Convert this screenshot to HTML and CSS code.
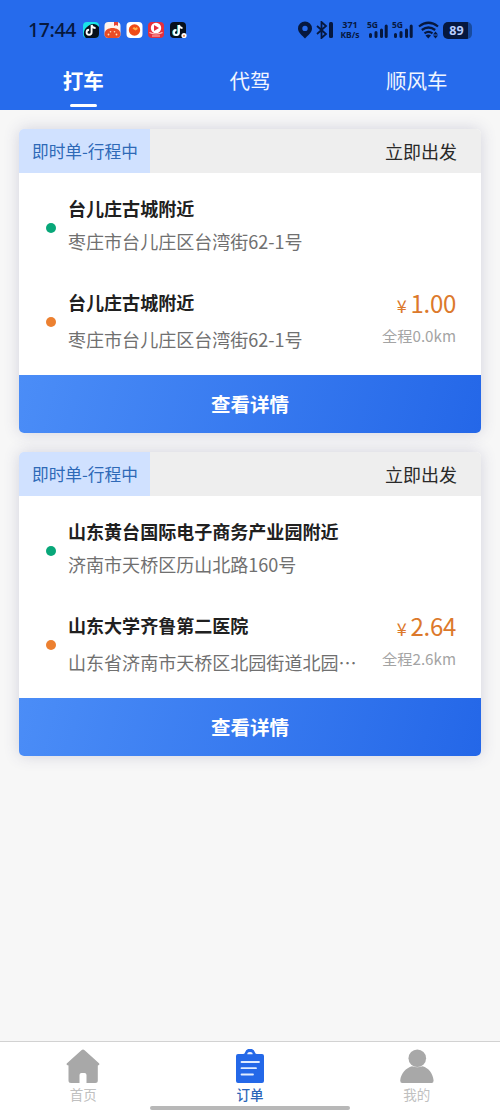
FILE: index.html
```
<!DOCTYPE html>
<html lang="zh-CN">
<head>
<meta charset="utf-8">
<meta name="viewport" content="width=device-width">
<title>订单</title>
<link rel="stylesheet" href="styles.css">
</head>
<body>
<div class="app">
  <header class="top">
    <div class="status">
      <div class="status-left">
        <span class="clock">17:44</span>
        <svg class="apps" width="106" height="18" viewBox="0 0 106 18">
          <rect x="1" y="1" width="16" height="16" rx="4" fill="#19e3e8"/><path d="M17 6v7a4 4 0 0 1-4 4H4c-3-2-3-8 1-11 4-4 9-4 12 0z" fill="#07101c"/><path d="M9.600 4v7.300a2.500 2.500 0 1 1-2.500-2.500M9.600 4c.5 2 2 3 4 3" fill="none" stroke="#fff" stroke-width="1.900"/>
          <rect x="22.500" y="1" width="16" height="16" rx="4" fill="#fff3ed"/><path d="M32 1h4v4l-2-1-2 1z" fill="#e74435"/><path d="M22.500 13c0-4 4-6 8-6s8 2 8 6a4 4 0 0 1-4 4h-8a4 4 0 0 1-4-4z" fill="#e94c25"/><g fill="#ffe4bd"><circle cx="26.500" cy="13.500" r=".9"/><circle cx="28.500" cy="10.800" r=".8"/><circle cx="32.500" cy="10.800" r=".8"/><circle cx="34.500" cy="13.500" r=".9"/></g>
          <rect x="44.500" y="1" width="16" height="16" rx="4" fill="#fff"/><circle cx="52.500" cy="9" r="5.700" fill="#ef4b18"/><path d="M50.500 7.500l1.500-1.500 1.500 1 1.500-1 .8 2-2.300 1.500z" fill="#ffb34a"/>
          <rect x="66" y="1" width="16" height="16" rx="4" fill="#e42f3c"/><circle cx="74" cy="7" r="5.200" fill="#fff"/><path d="M72 4l5 3-5 3z" fill="#e42f3c"/><path d="M67.500 11.500q6.500 3 13 0M70 15h8" stroke="#ffc6c0" stroke-width="1.100" fill="none"/>
          <rect x="88" y="1" width="16" height="16" rx="4" fill="#07101c"/><path d="M96.200 4v7.500a2.500 2.500 0 1 1-2.500-2.500" fill="none" stroke="#57e4e6" stroke-width="2"/><path d="M97 4v7.500A2.500 2.500 0 1 1 94.500 9M97 4c.5 2 2 3 3.500 3" fill="none" stroke="#fff" stroke-width="1.800"/><circle cx="102" cy="14.500" r="2.600" fill="#fff"/><circle cx="102" cy="14.800" r="1.100" fill="#e78a55"/>
        </svg>
      </div>
      <div class="status-right">
        <svg width="36" height="18" viewBox="0 0 36 18"><path d="M7 .5a7 7 0 0 0-7 7C0 12 4.500 14.500 7 17.500 9.500 14.500 14 12 14 7.500a7 7 0 0 0-7-7zM7 4.700a2.700 2.700 0 1 1 0 5.400 2.700 2.700 0 0 1 0-5.400z" fill="#06183f" fill-rule="evenodd"/><path d="M19 5l9 8-4.500 4V1L28 5l-9 8" fill="none" stroke="#06183f" stroke-width="1.800"/><rect x="31" y="1" width="4" height="16" rx="1.500" fill="#06183f"/></svg>
        <div class="speed"><span class="rate">371</span><span>KB/s</span></div>
        <div class="signal"><span class="gen">5G</span><svg width="20" height="18" viewBox="0 0 20 18"><path d="M2.500 13.500v2M8 11.500v4M13.500 9v6.500M18.200 5v10.500" stroke="#06183f" stroke-width="3" stroke-linecap="round"/></svg></div>
        <div class="signal"><span class="gen">5G</span><svg width="20" height="18" viewBox="0 0 20 18"><path d="M2.500 13.500v2M8 11.500v4M13.500 9v6.500M18.200 5v10.500" stroke="#06183f" stroke-width="3" stroke-linecap="round"/></svg></div>
        <svg class="wifi" width="21" height="18" viewBox="0 0 21 18"><path d="M1 5.500q9.500-7.500 19 0M3.800 9q6.700-5 13.400 0M6.500 12.300q4-3 8 0" fill="none" stroke="#06183f" stroke-width="2.200"/><path d="M7.500 14.500q3-1.800 5.500 0l-2.700 3zM17.500 10.500l2.500 3h-5zM17.500 17.500l2.500-3h-5z" fill="#06183f"/></svg>
        <span class="battery">89</span>
      </div>
    </div>
    <nav class="tabs">
      <span class="tab tab-on">打车</span><span class="tab">代驾</span><span class="tab">顺风车</span>
    </nav>
  </header>

  <main class="orders">
    <section class="card">
      <div class="card-head"><span class="tag">即时单-行程中</span><span class="depart">立即出发</span></div>
      <div class="card-body">
        <div class="stop"><i class="dot dot-start"></i><div class="place"><h2>台儿庄古城附近</h2><p>枣庄市台儿庄区台湾街62-1号</p></div></div>
        <div class="stop stop-end"><i class="dot"></i><div class="place"><h2>台儿庄古城附近</h2><p>枣庄市台儿庄区台湾街62-1号</p></div>
          <div class="fare"><div class="price"><span class="yen">¥</span>1.00</div><div class="distance">全程0.0km</div></div></div>
      </div>
      <div class="detail">查看详情</div>
    </section>
    <section class="card">
      <div class="card-head"><span class="tag">即时单-行程中</span><span class="depart">立即出发</span></div>
      <div class="card-body">
        <div class="stop"><i class="dot dot-start"></i><div class="place"><h2>山东黄台国际电子商务产业园附近</h2><p>济南市天桥区历山北路160号</p></div></div>
        <div class="stop stop-end"><i class="dot"></i><div class="place"><h2>山东大学齐鲁第二医院</h2><p>山东省济南市天桥区北园街道北园⋯</p></div>
          <div class="fare"><div class="price"><span class="yen">¥</span>2.64</div><div class="distance">全程2.6km</div></div></div>
      </div>
      <div class="detail">查看详情</div>
    </section>
  </main>

  <footer class="bottom">
    <div class="nav">
      <div class="nav-item"><svg width="34" height="35" viewBox="0 0 34 35"><path d="M15.400 1.200q1.600-1.300 3.200 0L33 14.200q1.200 2-1.200 2.200V31.500q0 2.500-2.500 2.500H20.500V26q0-2-2-2h-3q-2 0-2 2v8H5q-2.500 0-2.500-2.500V16.400Q-.5 16.200 1 14.200z" fill="#a8a8a8"/></svg><span>首页</span></div>
      <div class="nav-item nav-on"><svg width="34" height="35" viewBox="0 0 34 35"><path d="M5 5h5q1.500 0 2-1.500a5.200 5.200 0 0 1 10 0Q22.500 5 24 5h5q2 0 2 2v25q0 2-2 2H5q-2 0-2-2V7q0-2 2-2z" fill="#2468e8"/><path d="M14.300 5.200a2.700 2.300 0 0 1 5.400 0z" fill="#eef4ff"/><path d="M8.500 13h17.500M8.500 19.200H23M8.500 25.500H20" stroke="#e1ecff" stroke-width="1.800" stroke-linecap="round"/></svg><span>订单</span></div>
      <div class="nav-item"><svg width="34" height="35" viewBox="0 0 34 35"><circle cx="17.300" cy="9.300" r="8.800" fill="#a8a8a8"/><path d="M.2 31.500C1 24 6 19 12 17.200q5.300 2.200 10.600 0c6 1.800 10.200 6.800 11 14.300q0 2.500-2 2.500H2.200q-2 0-2-2.500z" fill="#a8a8a8"/></svg><span>我的</span></div>
    </div>
    <div class="home-bar"></div>
  </footer>
</div>
</body>
</html>
```
FILE: styles.css
```
* { box-sizing: border-box; }
body { margin: 0; font-family: "Noto Sans CJK SC", sans-serif; }
h2, p { margin: 0; }
svg { display: block; flex: none; }
.app { width: 500px; height: 1111px; display: flex; flex-direction: column; background: #f7f7f7; overflow: hidden; }
.top { height: 110px; flex: none; background: #266bec; }
.status { height: 60px; padding: 0 28px; display: flex; align-items: center; justify-content: space-between; color: #06183f; }
.status-left, .status-right { display: flex; align-items: center; }
.clock { width: 54px; font: 500 19.500px/24px "Noto Sans", sans-serif; letter-spacing: -.4px; }
.speed { width: 20px; margin-left: 6px; display: flex; flex-direction: column; align-items: center; gap: 2px; font: 700 8.500px/8px "Noto Sans", sans-serif; white-space: nowrap; }
.rate { font-size: 9px; }
.signal { position: relative; margin-left: 5px; }
.speed + .signal { margin-left: 8px; }
.gen { position: absolute; left: -1px; top: -1px; font: 700 8.500px/9px "Noto Sans", sans-serif; }
.wifi { margin-left: 5px; }
.battery { width: 29px; height: 17px; margin-left: 4px; padding-right: 2px; border-radius: 5px; background: linear-gradient(90deg, #06183f 25px, #174a9e 25px); color: #b9ceff; font: 700 12.500px/17px "Noto Sans", sans-serif; text-align: center; }
.tabs { height: 50px; display: grid; grid-template-columns: repeat(3, 1fr); color: #f0f5ff; font-size: 20.500px; line-height: 40px; text-align: center; }
.tab-on { font-weight: 700; color: #fff; }
.tab-on::after { content: ""; display: block; width: 27px; height: 3px; margin: 4px auto 0; border-radius: 2px; background: #fff; }
.orders { flex: 1; display: flex; flex-direction: column; gap: 19px; padding: 19px; }
.card { height: 304px; display: flex; flex-direction: column; background: #fff; border-radius: 5px; box-shadow: 0 0 16px rgba(65, 65, 120, .2); }
.card-head { height: 44px; display: flex; justify-content: space-between; background: #eee; border-radius: 5px 5px 0 0; overflow: hidden; }
.tag { width: 131px; padding-left: 13px; background: #d0e1ff; color: #2e69b7; font-size: 16.700px; line-height: 45px; }
.depart { padding-right: 24px; color: #292929; font-size: 18px; line-height: 45px; }
.card-body { height: 202px; padding: 22px 25px 0 27px; display: flex; flex-direction: column; gap: 35px; }
.stop { display: flex; align-items: flex-start; }
.dot { width: 10px; height: 10px; flex: none; margin: 27.500px 12px 0 0; border-radius: 50%; background: #ec8030; }
.dot-start { background: #08a779; }
.place { flex: 1; min-width: 0; white-space: nowrap; font-size: 18.050px; line-height: 26px; }
.place h2 { color: #202020; font-size: 18.050px; font-weight: 700; }
.place p { margin-top: 7px; color: #707070; }
.stop-end p { margin-top: 11px; }
.fare { text-align: right; white-space: nowrap; }
.price { color: #dc792b; font-size: 24px; line-height: 27px; letter-spacing: -.3px; }
.yen { margin-right: 4px; font-size: 18px; }
.distance { margin-top: 5px; color: #a4a4a4; font-size: 15.200px; line-height: 23px; }
.detail { height: 58px; border-radius: 0 0 5px 5px; background: linear-gradient(105deg, #4b8df7, #2467e8); color: #fff; font-size: 19.500px; font-weight: 700; line-height: 58px; text-align: center; }
.bottom { height: 70px; flex: none; border-top: 1px solid #d2d2d2; background: #fff; }
.nav { height: 64px; padding-top: 7px; display: grid; grid-template-columns: repeat(3, 1fr); color: #c0c0c0; font-size: 13.500px; line-height: 20px; }
.nav-item { display: flex; flex-direction: column; align-items: center; }
.nav-on { color: #2b65b8; font-weight: 500; }
.home-bar { width: 200px; height: 4px; margin: 0 auto; border-radius: 2px; background: #b8b8b8; }
```
